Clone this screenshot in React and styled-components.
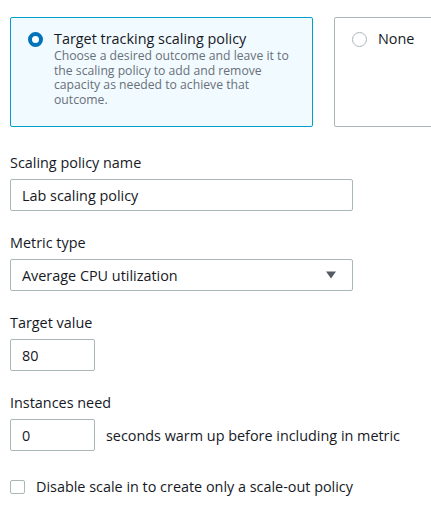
import React from "react";
import styled, { createGlobalStyle } from "styled-components";

const Global = createGlobalStyle`
  html, body { margin: 0; padding: 0; background: #ffffff; overflow: hidden; }
  body { font-family: "Open Sans", "Noto Sans", sans-serif; color: #16191f; }
  * { box-sizing: border-box; }
`;

const Page = styled.div`
  width: 431px;
  height: 507px;
  overflow: hidden;
  padding: 17px 0 0 10px;
`;

const Tiles = styled.div`
  display: flex;
  gap: 21px;
  width: 700px;
`;

const Tile = styled.label`
  flex: 0 0 303px;
  height: 110px;
  display: flex;
  gap: 11px;
  padding: 11px 16px 0 17px;
  border: 1px solid ${(p) => (p.$selected ? "#00a1c9" : "#aab7b8")};
  background: ${(p) => (p.$selected ? "#f1faff" : "#ffffff")};
  border-radius: 2px;
`;

const Radio = styled.span`
  flex: 0 0 auto;
  width: 15px;
  height: 15px;
  margin-top: 3px;
  border-radius: 50%;
  background: #ffffff;
  border: ${(p) => (p.$checked ? "4.5px solid #0073bb" : "1px solid #aab7b8")};
`;

const TileText = styled.div`
  display: flex;
  flex-direction: column;
`;

const TileTitle = styled.span`
  font-size: 14.4px;
  line-height: 20px;
  color: #16191f;
`;

const TileDesc = styled.span`
  font-size: 12.2px;
  line-height: 14.7px;
  color: #687078;
`;

const Form = styled.div`
  display: flex;
  flex-direction: column;
  gap: 22px;
  margin-top: 26px;
`;

const Field = styled.div`
  display: flex;
  flex-direction: column;
  gap: 6px;
`;

const Label = styled.div`
  font-size: 14.4px;
  line-height: 20px;
  color: #16191f;
`;

const Input = styled.div`
  width: ${(p) => p.$w}px;
  height: 32px;
  display: flex;
  align-items: center;
  justify-content: space-between;
  padding: 0 16px 0 11px;
  border: 1px solid #aab7b8;
  border-radius: 2px;
  font-size: 14.4px;
  color: #16191f;
  background: #ffffff;
`;

const InlineRow = styled.div`
  display: flex;
  align-items: center;
  gap: 11px;
  font-size: 14.4px;
`;

const CheckRow = styled.label`
  display: flex;
  align-items: center;
  gap: 11px;
  margin-top: 4px;
  font-size: 14.4px;
`;

const Box = styled.span`
  width: 15px;
  height: 14px;
  border: 1px solid #aab7b8;
  border-radius: 2px;
  background: #ffffff;
`;

const Caret = () => (
  <svg width="10" height="8" viewBox="0 0 10 8">
    <path d="M0 0.5 H10 L5 7.5 Z" fill="#545b64" />
  </svg>
);

export default function App() {
  return (
    <>
      <Global />
      <Page>
        <Tiles>
          <Tile $selected>
            <Radio $checked />
            <TileText>
              <TileTitle>Target tracking scaling policy</TileTitle>
              <TileDesc>
                Choose a desired outcome and leave it to the scaling policy to add and remove capacity as needed to achieve that outcome.
              </TileDesc>
            </TileText>
          </Tile>
          <Tile>
            <Radio />
            <TileText>
              <TileTitle>None</TileTitle>
            </TileText>
          </Tile>
        </Tiles>
        <Form>
          <Field>
            <Label>Scaling policy name</Label>
            <Input $w={343}>Lab scaling policy</Input>
          </Field>
          <Field>
            <Label>Metric type</Label>
            <Input $w={343}>
              Average CPU utilization
              <Caret />
            </Input>
          </Field>
          <Field>
            <Label>Target value</Label>
            <Input $w={85}>80</Input>
          </Field>
          <Field>
            <Label>Instances need</Label>
            <InlineRow>
              <Input $w={85}>0</Input>
              seconds warm up before including in metric
            </InlineRow>
          </Field>
          <CheckRow>
            <Box />
            Disable scale in to create only a scale-out policy
          </CheckRow>
        </Form>
      </Page>
    </>
  );
}
